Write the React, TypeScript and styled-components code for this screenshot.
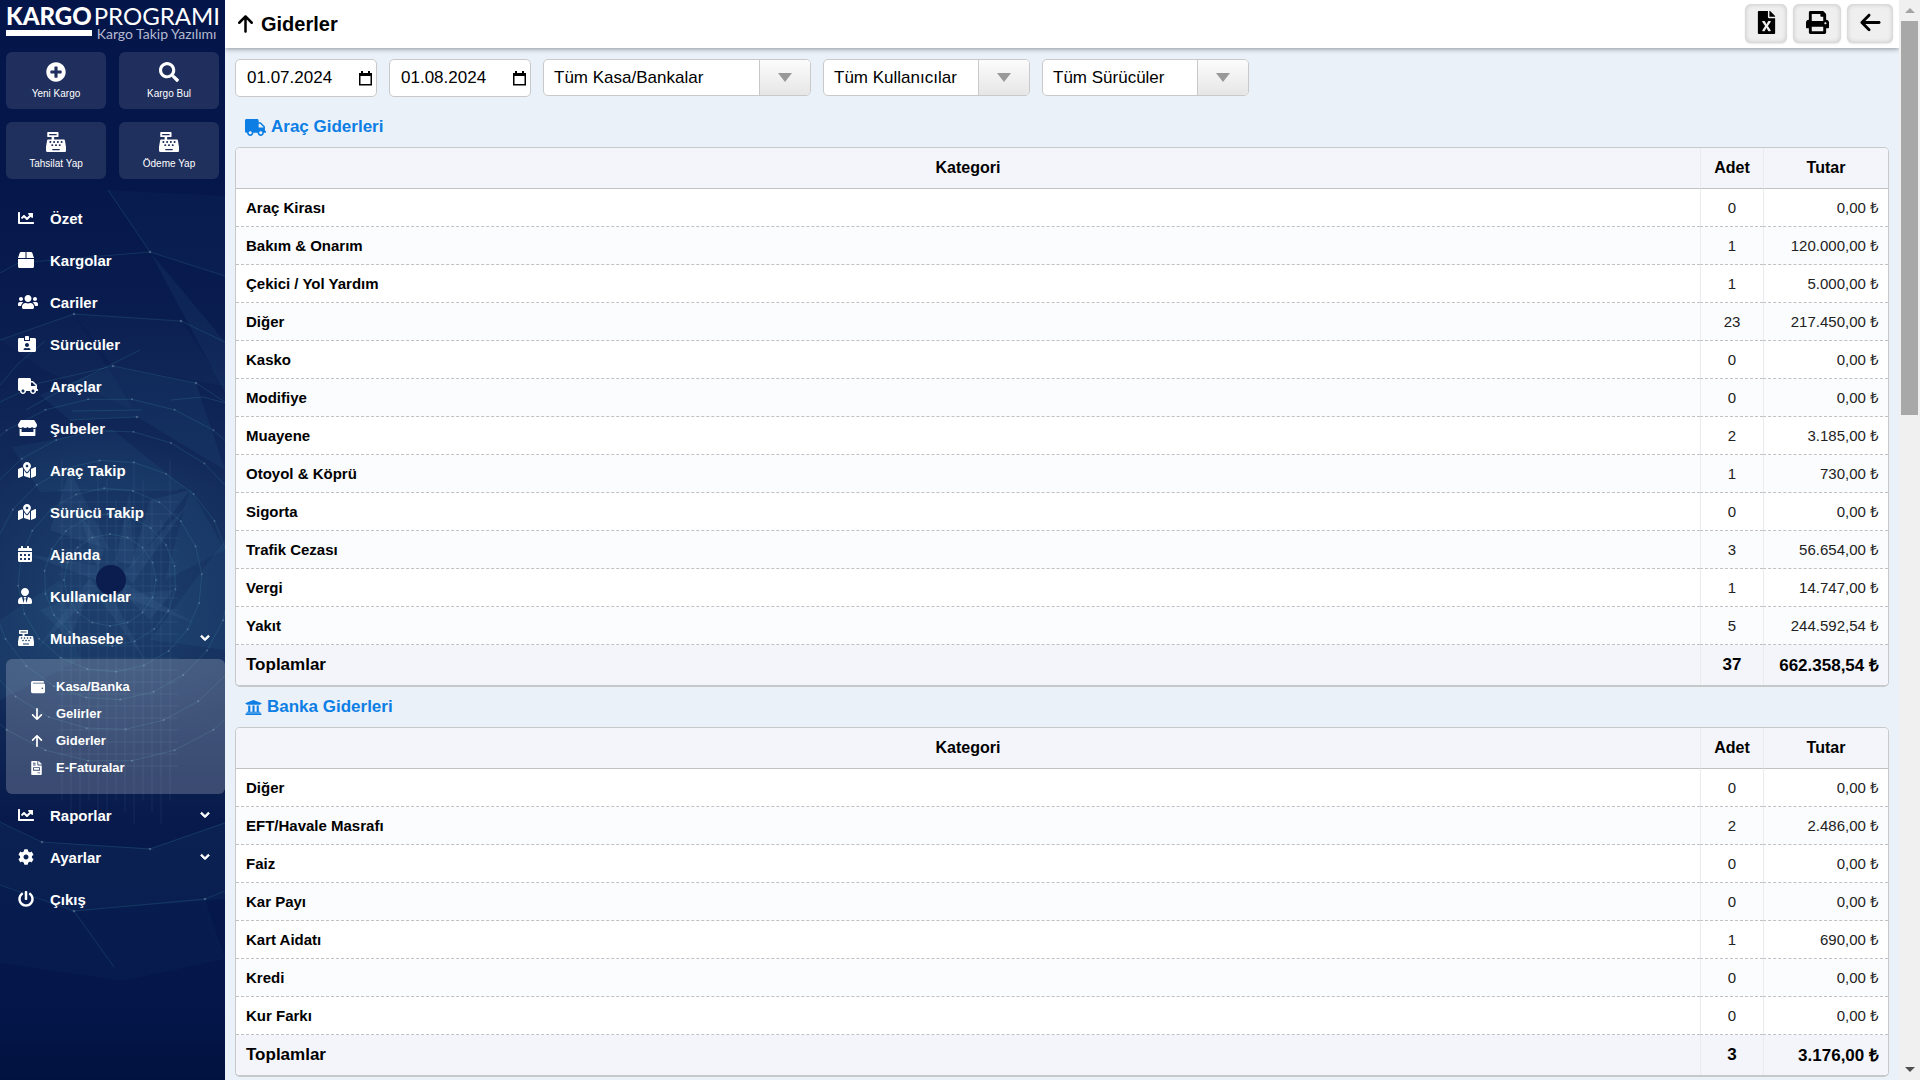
import React from "react";
import styled, { createGlobalStyle } from "styled-components";
import {
  FaChartLine,
  FaBox,
  FaUsers,
  FaIdCardAlt,
  FaTruck,
  FaStore,
  FaMapMarkedAlt,
  FaCalendarAlt,
  FaUserTie,
  FaCashRegister,
  FaWallet,
  FaFileInvoice,
  FaCog,
  FaPowerOff,
  FaUniversity,
  FaFileExcel,
  FaPrint,
  FaChevronDown,
  FaPlusCircle,
  FaSearch,
} from "react-icons/fa";
import { FaArrowDown, FaArrowLeft, FaArrowUp } from "react-icons/fa6";

const GlobalStyle = createGlobalStyle`
  *, *::before, *::after { box-sizing: border-box; }
  body {
    margin: 0;
    background: #eaf1f9;
    color: #000;
    font-family: "Liberation Sans", Arial, sans-serif;
    font-size: 15px;
  }
  button, input, select { font: inherit; color: inherit; margin: 0; }
  svg { display: block; flex: none; }
`;

const Shell = styled.div`
  display: grid;
  grid-template-columns: 225px minmax(0, 1fr) 21px;
  height: 100vh;
  overflow: hidden;
`;

/* Icon whose box is as wide as its glyph */
const Glyph = styled.span<{ $width: number; $height: number }>`
  svg {
    width: ${(p) => p.$width}px;
    height: ${(p) => p.$height}px;
  }
`;

/* ---------- Sidebar ---------- */

const Sidebar = styled.aside`
  position: relative;
  isolation: isolate;
  overflow: hidden;
  background: #04154a;
  color: #fff;
`;

const Backdrop = styled.svg`
  position: absolute;
  inset: 0;
  z-index: -1;
  width: 100%;
  height: 100%;
`;

const Logo = styled.a`
  display: grid;
  grid-template-columns: auto 1fr;
  column-gap: 2px;
  height: 52px;
  padding: 2px 6px 0;
  align-content: start;
  color: #fff;
  font-family: Lato, sans-serif;
  font-size: 24px;
  line-height: 28px;
  text-decoration: none;
  white-space: nowrap;
`;

const LogoBold = styled.span`
  font-weight: 900;
`;

const LogoLight = styled.span`
  font-weight: 400;
`;

const LogoBar = styled.span`
  height: 6px;
  background: #fff;
`;

const LogoTag = styled.span`
  padding-left: 3px;
  color: #b4bad0;
  font-size: 14px;
  line-height: 8px;
`;

const QuickGrid = styled.div`
  display: grid;
  grid-template-columns: 1fr 1fr;
  gap: 13px;
  padding: 0 6px 18px;
`;

const QuickButton = styled.button`
  display: flex;
  flex-direction: column;
  align-items: center;
  gap: 6px;
  height: 57px;
  padding: 10px 0 0;
  border: 0;
  border-radius: 6px;
  background: rgba(255, 255, 255, 0.11);
  font-size: 10px;
  line-height: 12px;

  svg {
    font-size: 20px;
  }
`;

const Menu = styled.nav`
  display: flex;
  flex-direction: column;
`;

const MenuLink = styled.a`
  display: grid;
  grid-template-columns: 32px 1fr auto;
  align-items: center;
  height: 42px;
  padding: 0 15px 0 18px;
  color: #fff;
  font-size: 15px;
  font-weight: 700;
  text-decoration: none;

  > svg {
    font-size: 10px;
    stroke: currentColor;
    stroke-width: 50px;
  }
`;

const SubMenu = styled.div`
  margin-left: 6px;
  padding: 14px 0 13px;
  border-radius: 6px;
  background: rgba(255, 255, 255, 0.2);
`;

const SubLink = styled.a`
  display: grid;
  grid-template-columns: 25px 1fr;
  align-items: center;
  height: 27px;
  padding-left: 25px;
  color: #fff;
  font-size: 13px;
  font-weight: 700;
  text-decoration: none;
`;

/* ---------- Main ---------- */

const Main = styled.main`
  min-width: 0;
  overflow: hidden;
`;

const Header = styled.header`
  display: flex;
  align-items: center;
  justify-content: space-between;
  height: 48px;
  padding: 0 6px 1px 12px;
  background: #fff;
  box-shadow: 0 1px 5px rgba(0, 0, 0, 0.4);
`;

const Title = styled.h1`
  display: flex;
  align-items: center;
  gap: 7px;
  margin: 0;
  font-size: 20px;
  line-height: 24px;
`;

const Actions = styled.div`
  display: flex;
  gap: 6px;
`;

const ActionButton = styled.button<{ $width: number }>`
  display: grid;
  place-items: center;
  width: ${(p) => p.$width}px;
  height: 39px;
  padding: 0 0 2px;
  border: 0;
  border-radius: 6px;
  background: #efefef;
  box-shadow: inset 0 0 5px rgba(0, 0, 0, 0.2), 0 1px 2px rgba(0, 0, 0, 0.1);
  font-size: 23px;
`;

const Content = styled.div`
  padding: 11px 10px 4px;
`;

const Filters = styled.form`
  display: flex;
  align-items: flex-start;
  gap: 12px;
  height: 48px;
`;

const DateField = styled.label`
  display: flex;
  align-items: center;
  width: 142px;
  height: 38px;
  padding: 0 4px 0 11px;
  border: 1px solid #c9c9c9;
  border-radius: 5px;
  background: #fff;

  input {
    flex: 1;
    min-width: 0;
    padding: 0;
    border: 0;
    outline: 0;
    background: none;
    font-size: 17px;
  }
`;

const SelectBox = styled.div<{ $width: number }>`
  display: grid;
  grid-template-columns: 1fr 51px;
  width: ${(p) => p.$width}px;
  height: 37px;
  border: 1px solid #c9c9c9;
  border-radius: 5px;
  background: #fff;
  overflow: hidden;

  select {
    grid-area: 1 / 1 / 2 / 3;
    appearance: none;
    padding: 0 51px 0 10px;
    border: 0;
    outline: 0;
    background: none;
    font-size: 17px;
  }
`;

const SelectArrow = styled.span`
  grid-area: 1 / 2 / 2 / 3;
  display: grid;
  place-items: center;
  border-left: 1px solid #c9c9c9;
  background: linear-gradient(#fcfcfc, #e6e6e6);
  pointer-events: none;

  &::before {
    content: "";
    border: 7px solid transparent;
    border-top: 9px solid #999;
    border-bottom: 0;
  }
`;

const SectionTitle = styled.h2`
  display: flex;
  align-items: center;
  gap: 5px;
  height: 40px;
  margin: 0;
  padding: 0 10px;
  color: #0d7ee4;
  font-size: 17px;
  line-height: 20px;
`;

const TableFrame = styled.div`
  border: 1px solid #c6c8ca;
  border-bottom-width: 2px;
  border-radius: 5px;
  background: #fff;
  overflow: hidden;
`;

const Table = styled.table`
  width: 100%;
  border-collapse: separate;
  border-spacing: 0;
  table-layout: fixed;

  th,
  td {
    height: 38px;
    padding: 0 10px;
    border-bottom: 1px dashed #bfc1c5;
    text-align: left;
  }

  td {
    padding: 0 9px 1px;
  }

  th + th,
  th + td,
  td + td {
    border-left: 1px solid #eaebed;
  }

  tbody tr:nth-child(even) {
    background: #fbfcfe;
  }

  tbody td {
    color: #222;
  }

  thead,
  tfoot {
    background: #f4f5fa;
    font-size: 16px;
  }

  thead th {
    height: 41px;
    border-bottom: 1px solid #bfc1c5;
    text-align: center;
  }

  tfoot {
    font-size: 17px;
  }

  tfoot th,
  tfoot td {
    height: 40px;
    border-bottom: 0;
    font-weight: 700;
  }

  td:nth-child(2) {
    text-align: center;
  }

  td:nth-child(3) {
    text-align: right;
  }
`;

const CountCol = styled.col`
  width: 63px;
`;

const AmountCol = styled.col`
  width: 125px;
`;

/* ---------- Scrollbar ---------- */

const ScrollTrack = styled.div`
  display: grid;
  grid-template-rows: 21px minmax(0, 1fr) 21px;
  justify-items: center;
  background: #f0f0f0;
`;

const ScrollArrow = styled.span<{ $down?: boolean }>`
  align-self: center;
  border: 5px solid transparent;
  border-top: ${(p) => (p.$down ? "5px solid #505050" : "0")};
  border-bottom: ${(p) => (p.$down ? "0" : "5px solid #a3a3a3")};
`;

const ScrollThumb = styled.span`
  width: 17px;
  height: 38%;
  background: #a8a8a8;
`;

/* ---------- Data ---------- */

type Row = [string, number, string];

const vehicleRows: Row[] = [
  ["Araç Kirası", 0, "0,00 ₺"],
  ["Bakım & Onarım", 1, "120.000,00 ₺"],
  ["Çekici / Yol Yardım", 1, "5.000,00 ₺"],
  ["Diğer", 23, "217.450,00 ₺"],
  ["Kasko", 0, "0,00 ₺"],
  ["Modifiye", 0, "0,00 ₺"],
  ["Muayene", 2, "3.185,00 ₺"],
  ["Otoyol & Köprü", 1, "730,00 ₺"],
  ["Sigorta", 0, "0,00 ₺"],
  ["Trafik Cezası", 3, "56.654,00 ₺"],
  ["Vergi", 1, "14.747,00 ₺"],
  ["Yakıt", 5, "244.592,54 ₺"],
];

const bankRows: Row[] = [
  ["Diğer", 0, "0,00 ₺"],
  ["EFT/Havale Masrafı", 2, "2.486,00 ₺"],
  ["Faiz", 0, "0,00 ₺"],
  ["Kar Payı", 0, "0,00 ₺"],
  ["Kart Aidatı", 1, "690,00 ₺"],
  ["Kredi", 0, "0,00 ₺"],
  ["Kur Farkı", 0, "0,00 ₺"],
];

type Item = { icon: React.ReactNode; label: string; width: number; open?: boolean };

const menuTop: Item[] = [
  { icon: <FaChartLine />, label: "Özet", width: 16 },
  { icon: <FaBox />, label: "Kargolar", width: 16 },
  { icon: <FaUsers />, label: "Cariler", width: 20 },
  { icon: <FaIdCardAlt />, label: "Sürücüler", width: 18 },
  { icon: <FaTruck />, label: "Araçlar", width: 20 },
  { icon: <FaStore />, label: "Şubeler", width: 19 },
  { icon: <FaMapMarkedAlt />, label: "Araç Takip", width: 18 },
  { icon: <FaMapMarkedAlt />, label: "Sürücü Takip", width: 18 },
  { icon: <FaCalendarAlt />, label: "Ajanda", width: 14 },
  { icon: <FaUserTie />, label: "Kullanıcılar", width: 14 },
  { icon: <FaCashRegister />, label: "Muhasebe", width: 16, open: true },
];

const subMenu: Item[] = [
  { icon: <FaWallet />, label: "Kasa/Banka", width: 14 },
  { icon: <FaArrowDown />, label: "Gelirler", width: 12 },
  { icon: <FaArrowUp />, label: "Giderler", width: 12 },
  { icon: <FaFileInvoice />, label: "E-Faturalar", width: 11 },
];

const menuBottom: Item[] = [
  { icon: <FaChartLine />, label: "Raporlar", width: 16, open: true },
  { icon: <FaCog />, label: "Ayarlar", width: 16, open: true },
  { icon: <FaPowerOff />, label: "Çıkış", width: 16 },
];

/* ---------- Parts ---------- */

function CalendarIcon() {
  return (
    <svg width="13" height="15" viewBox="0 0 13 15" aria-hidden="true">
      <path d="M.75 3h11.5v10.75H.75z" fill="none" stroke="#000" strokeWidth="1.5" />
      <path d="M0 2h13v3H0zM2 0h2v2H2zM9 0h2v2H9z" fill="#000" />
    </svg>
  );
}

function ringPoints(radius: number, count: number, turn: number) {
  return Array.from({ length: count }, (_, i) => {
    const a = ((i + turn) / count) * Math.PI * 2;
    return [110 + Math.cos(a) * radius, 580 + Math.sin(a) * radius];
  });
}

function NetworkBackdrop() {
  const rings = [46, 66, 92, 120, 150, 182].map((r, i) => ringPoints(r, 16 + i * 2, i * 0.4));
  return (
    <Backdrop viewBox="0 0 225 1080" preserveAspectRatio="xMidYMid slice" aria-hidden="true">
      <defs>
        <linearGradient id="depth" x1="0" y1="0" x2="0" y2="1">
          <stop offset="0" stopColor="#04154a" />
          <stop offset="0.16" stopColor="#05174a" />
          <stop offset="0.3" stopColor="#0a1d4f" />
          <stop offset="0.45" stopColor="#122b5a" />
          <stop offset="0.62" stopColor="#142e5c" />
          <stop offset="0.76" stopColor="#071a4b" />
          <stop offset="0.93" stopColor="#04164a" />
          <stop offset="1" stopColor="#021240" />
        </linearGradient>
        <radialGradient id="glow">
          <stop offset="0" stopColor="#2a5580" stopOpacity="0.5" />
          <stop offset="1" stopColor="#2a5580" stopOpacity="0" />
        </radialGradient>
      </defs>
      <rect width="225" height="1080" fill="url(#depth)" />
      <ellipse cx="110" cy="590" rx="170" ry="160" fill="url(#glow)" />
      <g fill="#3f7ba6" fillOpacity="0.1">
        <path d="M108 190l42 62 75 24v-80z" fillOpacity="0.05" />
        <path d="M150 252l75 90v50z" />
        <path d="M74 314l107 7 44 65-112-20z" fillOpacity="0.05" />
        <path d="M0 340l74-26 60 96-90-40z" fillOpacity="0.05" />
        <path d="M40 395l73-29 24 51-67 3z" />
        <path d="M113 366l83 17 29 87-88-53z" />
        <path d="M12 447l100-18 74 60-146 3z" />
        <path d="M190 488l35 62-60 30z" />
        <path d="M0 620l60-40 20 80-80 40z" />
        <path d="M150 640l75-100v110z" />
        <path d="M0 822l42 20 108 6 75-26v77l-151 12L0 885z" fillOpacity="0.07" />
        <path d="M0 885l74 26 131-12 20 60-102 22-123-18z" fillOpacity="0.05" />
      </g>
      <g fill="#5f93b8" fillOpacity="0.1">
        <path d="M98 570l-20-60 26 40zM116 560l14-70 4 76zM124 572l66-70-58 82zM126 584l70 40-76-28zM112 596l34 66-44-60zM98 590l-62 60 54-72zM96 580l-70-26 74 12z" />
        <path d="M70 470l40 80-60-20zM150 500l40-10-60 80zM150 620l24-30-50 4zM40 610l50-20-20 50z" />
      </g>
      <g stroke="#8fb0cf" strokeOpacity="0.05" strokeWidth="2">
        {Array.from({ length: 13 }, (_, i) => (
          <path key={i} d={`M${62 + i * 9} ${460 + (i % 4) * 20}V${800 + (i % 3) * 12}`} />
        ))}
        {Array.from({ length: 24 }, (_, i) => (
          <path key={i} d={`M58 ${490 + i * 12}H178`} />
        ))}
      </g>
      <g fill="none" stroke="#3f9aa8" strokeOpacity="0.2">
        {rings.map((r, i) => (
          <polygon key={i} points={r.map((p) => p.join(",")).join(" ")} />
        ))}
        <path d="M108 190l42 62 75 24M0 273l18-10 132-11M0 340l74-26 107 7 44 21M0 402l40-19 73-17 83 17 29 19M26 410l46-26 68-34M0 885l74 26 131-12 20-8M74 911l40 56M0 822l42 20 108 7 75-26" />
        <path d="M0 385l17-20 28-24M171 400l32-3 22 6M72 411l69-1M70 420l67-3" />
      </g>
      <g fill="#8ea3bd" fillOpacity="0.4">
        {rings.flat().map(([x, y], i) => (
          <circle key={i} cx={x} cy={y} r="1" />
        ))}
        {[
          [150, 252],
          [74, 314],
          [181, 321],
          [113, 366],
          [196, 383],
          [137, 417],
          [42, 842],
          [150, 849],
          [205, 899],
          [74, 911],
        ].map(([x, y]) => (
          <circle key={`${x}-${y}`} cx={x} cy={y} r="1.3" />
        ))}
      </g>
      <circle cx="111" cy="580" r="15" fill="#0b1c4e" />
    </Backdrop>
  );
}

function MenuItem({ icon, label, width, open }: Item) {
  return (
    <MenuLink href="#">
      <Glyph $width={width} $height={16}>
        {icon}
      </Glyph>
      <span>{label}</span>
      {open && <FaChevronDown overflow="visible" />}
    </MenuLink>
  );
}

function FilterSelect({ label, width }: { label: string; width: number }) {
  return (
    <SelectBox $width={width}>
      <select aria-label={label}>
        <option>{label}</option>
      </select>
      <SelectArrow />
    </SelectBox>
  );
}

function ExpenseTable({ rows, count, total }: { rows: Row[]; count: number; total: string }) {
  return (
    <TableFrame>
      <Table>
        <colgroup>
          <col />
          <CountCol />
          <AmountCol />
        </colgroup>
        <thead>
          <tr>
            <th scope="col">Kategori</th>
            <th scope="col">Adet</th>
            <th scope="col">Tutar</th>
          </tr>
        </thead>
        <tbody>
          {rows.map(([name, qty, amount]) => (
            <tr key={name}>
              <th scope="row">{name}</th>
              <td>{qty}</td>
              <td>{amount}</td>
            </tr>
          ))}
        </tbody>
        <tfoot>
          <tr>
            <th scope="row">Toplamlar</th>
            <td>{count}</td>
            <td>{total}</td>
          </tr>
        </tfoot>
      </Table>
    </TableFrame>
  );
}

export default function App() {
  return (
    <>
      <GlobalStyle />
      <Shell>
        <Sidebar>
          <NetworkBackdrop />
          <Logo href="#">
            <LogoBold>KARGO</LogoBold>
            <LogoLight>PROGRAMI</LogoLight>
            <LogoBar />
            <LogoTag>Kargo Takip Yazılımı</LogoTag>
          </Logo>
          <QuickGrid>
            <QuickButton type="button">
              <FaPlusCircle />
              Yeni Kargo
            </QuickButton>
            <QuickButton type="button">
              <FaSearch />
              Kargo Bul
            </QuickButton>
            <QuickButton type="button">
              <FaCashRegister />
              Tahsilat Yap
            </QuickButton>
            <QuickButton type="button">
              <FaCashRegister />
              Ödeme Yap
            </QuickButton>
          </QuickGrid>
          <Menu>
            {menuTop.map((item) => (
              <MenuItem key={item.label} {...item} />
            ))}
            <SubMenu>
              {subMenu.map((item) => (
                <SubLink key={item.label} href="#">
                  <Glyph $width={item.width} $height={14}>
                    {item.icon}
                  </Glyph>
                  <span>{item.label}</span>
                </SubLink>
              ))}
            </SubMenu>
            {menuBottom.map((item) => (
              <MenuItem key={item.label} {...item} />
            ))}
          </Menu>
        </Sidebar>

        <Main>
          <Header>
            <Title>
              <Glyph $width={17} $height={20}>
                <FaArrowUp />
              </Glyph>
              Giderler
            </Title>
            <Actions>
              <ActionButton type="button" $width={42} aria-label="Excel">
                <FaFileExcel />
              </ActionButton>
              <ActionButton type="button" $width={48} aria-label="Yazdır">
                <FaPrint />
              </ActionButton>
              <ActionButton type="button" $width={46} aria-label="Geri">
                <FaArrowLeft />
              </ActionButton>
            </Actions>
          </Header>
          <Content>
            <Filters>
              <DateField>
                <input type="text" aria-label="Başlangıç" defaultValue="01.07.2024" />
                <CalendarIcon />
              </DateField>
              <DateField>
                <input type="text" aria-label="Bitiş" defaultValue="01.08.2024" />
                <CalendarIcon />
              </DateField>
              <FilterSelect label="Tüm Kasa/Bankalar" width={268} />
              <FilterSelect label="Tüm Kullanıcılar" width={207} />
              <FilterSelect label="Tüm Sürücüler" width={207} />
            </Filters>
            <SectionTitle>
              <Glyph $width={21} $height={17}>
                <FaTruck />
              </Glyph>
              Araç Giderleri
            </SectionTitle>
            <ExpenseTable rows={vehicleRows} count={37} total="662.358,54 ₺" />
            <SectionTitle>
              <Glyph $width={17} $height={17}>
                <FaUniversity />
              </Glyph>
              Banka Giderleri
            </SectionTitle>
            <ExpenseTable rows={bankRows} count={3} total="3.176,00 ₺" />
          </Content>
        </Main>

        <ScrollTrack>
          <ScrollArrow />
          <ScrollThumb />
          <ScrollArrow $down />
        </ScrollTrack>
      </Shell>
    </>
  );
}
